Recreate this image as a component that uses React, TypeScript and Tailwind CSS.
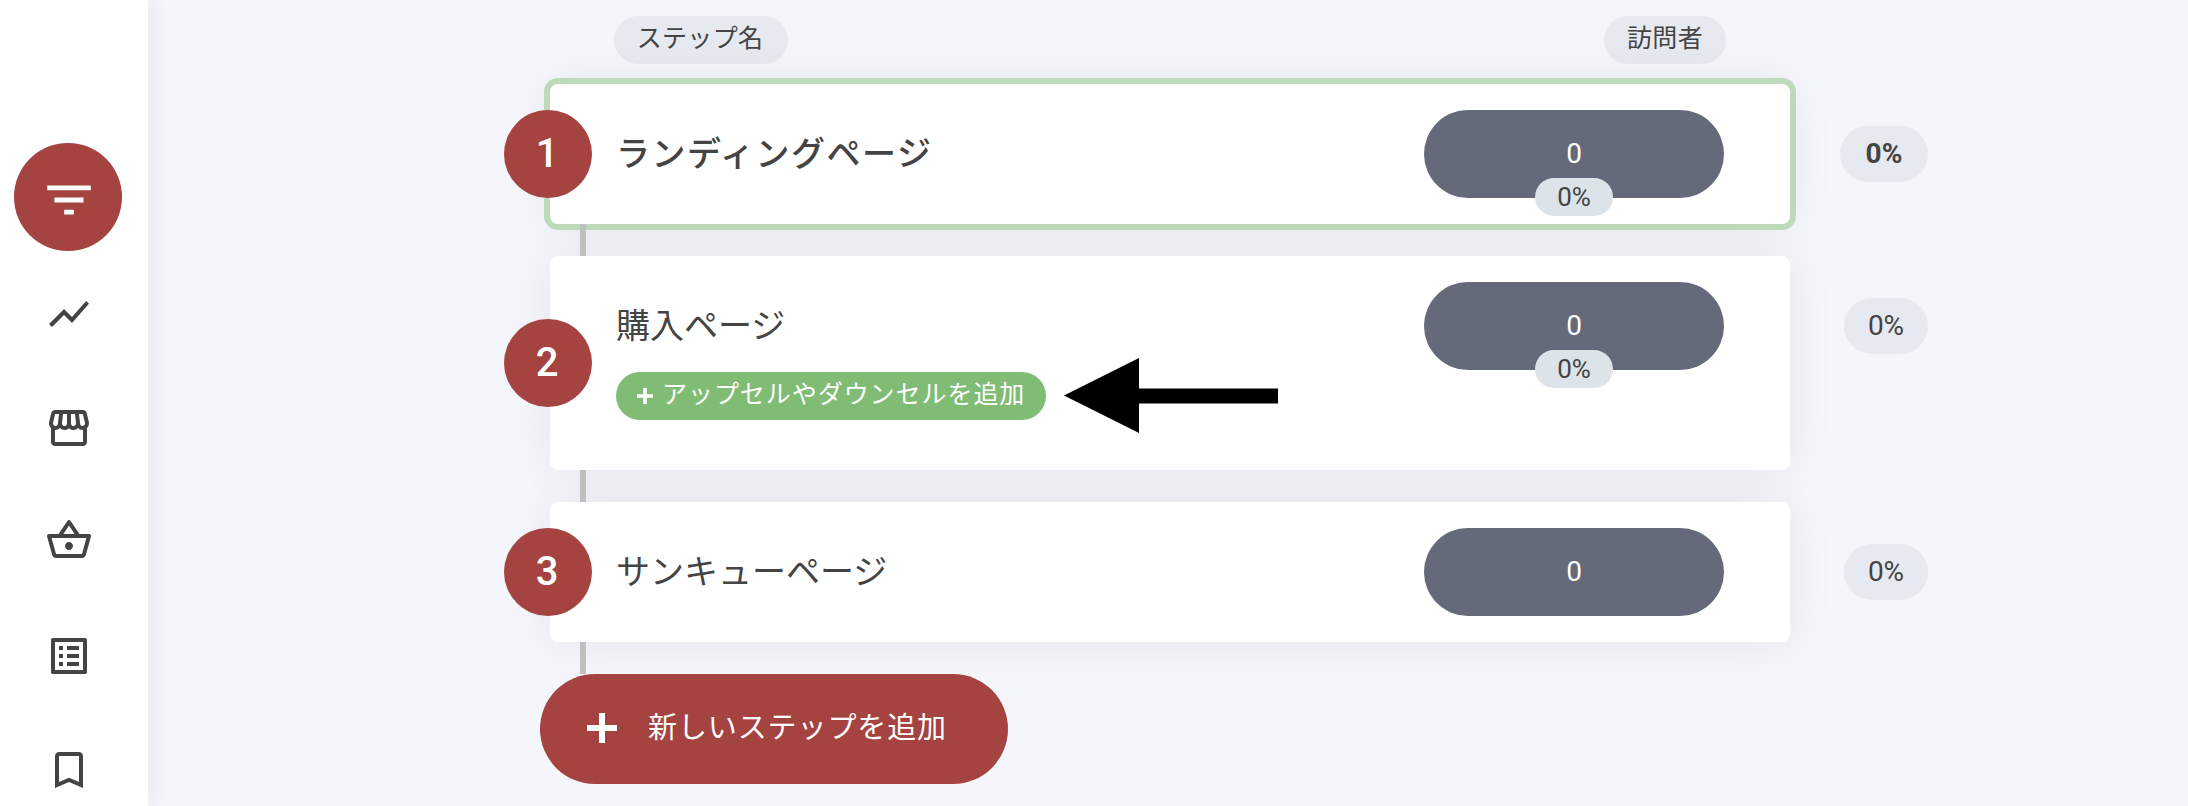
import React from "react";
import {
  MdFilterList,
  MdShowChart,
  MdOutlineStorefront,
  MdOutlineShoppingBasket,
  MdOutlineListAlt,
  MdBookmarkBorder,
} from "react-icons/md";

type Step = {
  title: string;
  visitors: string;
  badge?: string;
  rate: string;
  active?: boolean;
  upsell?: string;
};

const steps: Step[] = [
  { title: "ランディングページ", visitors: "0", badge: "0%", rate: "0%", active: true },
  { title: "購入ページ", visitors: "0", badge: "0%", rate: "0%", upsell: "アップセルやダウンセルを追加" },
  { title: "サンキューページ", visitors: "0", rate: "0%" },
];

function Sidebar() {
  return (
    <nav className="relative flex w-[148px] shrink-0 flex-col items-start bg-white pt-[143px] text-[#444444] shadow-[0_0_32px_rgba(0,0,0,0.08)]">
      <button className="ml-[14px] flex size-[108px] items-center justify-center rounded-full bg-[#a54341] pt-[6px] pl-[2px] text-white">
        <MdFilterList className="size-[58px]" />
      </button>
      <div className="ml-[45px] flex flex-col pt-[39px]">
        <MdShowChart className="size-12" />
        <MdOutlineStorefront className="mt-[66px] size-12" />
        <MdOutlineShoppingBasket className="mt-[64px] size-12" />
        <MdOutlineListAlt className="mt-[68px] size-12" />
        <MdBookmarkBorder className="mt-[66px] size-12" />
      </div>
    </nav>
  );
}

function Arrow() {
  return (
    <svg className="ml-[18px] h-[75px] w-[214px] shrink-0" viewBox="0 0 214 75">
      <path d="M0 37.5 75 0v30.5h139v15H75V75z" fill="#000" />
    </svg>
  );
}

function Connector() {
  return <div className="relative z-10 ml-[30px] h-8 w-[6px] bg-[#bfbfbf]" />;
}

function StepRow({ step, index }: { step: Step; index: number }) {
  return (
    <div className="flex w-[1378px] items-start justify-between">
      <div
        className={
          "relative flex w-[1240px] justify-between rounded-lg bg-white pt-[26px] pr-[66px] pl-[66px] " +
          (step.upsell ? "h-[214px] " : "h-[140px] ") +
          (step.active
            ? "shadow-[0_0_0_6px_#bddabb,0_0_50px_rgba(20,20,40,0.07)]"
            : "shadow-[0_0_50px_rgba(20,20,40,0.07)]")
        }
      >
        <div className="absolute top-1/2 -left-[46px] flex size-[88px] -translate-y-1/2 items-center justify-center rounded-full bg-[#a54341] pr-[2px] text-[40px] leading-none font-medium text-white">
          {index}
        </div>
        <div className="flex flex-col">
          <h2
            className={
              "flex h-[88px] items-center pb-[1px] text-[34px] leading-[44px] whitespace-nowrap " +
              (step.active ? "font-medium tracking-[1.5px]" : "font-normal")
            }
          >
            {step.title}
          </h2>
          {step.upsell && (
            <div className="-mt-[12px] flex h-[75px] items-center">
              <button className="flex h-12 w-[430px] items-center rounded-full bg-[#81bc75] pb-[2px] pl-[20px] text-[25px] leading-8 font-normal tracking-[0.95px] whitespace-nowrap text-white">
                <svg className="mt-[2px] mr-[8px] size-[18px]" viewBox="0 0 18 18">
                  <path d="M9 1v16M1 9h16" stroke="currentColor" strokeWidth="3.6" />
                </svg>
                {step.upsell}
              </button>
              <Arrow />
            </div>
          )}
        </div>
        <div className="relative flex h-[88px] w-[300px] items-center justify-center rounded-full bg-[#646a79] text-[28px] text-white">
          {step.visitors}
          {step.badge && (
            <div className="absolute top-[68px] left-[111px] flex h-[38px] w-[78px] items-center justify-center rounded-full bg-[#dce3e9] text-[26px] leading-none text-[#444444]">
              {step.badge}
            </div>
          )}
        </div>
      </div>
      <div
        className={
          "mt-[42px] flex h-14 items-center justify-center rounded-full bg-[#e7e9f1] text-[28px] leading-none text-[#444444] " +
          (step.active ? "w-[88px] font-bold" : "w-[84px]")
        }
      >
        {step.rate}
      </div>
    </div>
  );
}

export default function App() {
  return (
    <div className="flex h-[806px] w-full overflow-hidden bg-[#f4f6fb] font-['Roboto','Noto_Sans_CJK_JP',sans-serif] text-[#444444]">
      <Sidebar />
      <main className="flex flex-1 flex-col pt-4 pl-[402px]">
        <div className="mb-5 flex w-[1176px] justify-between pl-[64px] text-[25px] leading-8 tracking-[0.3px] whitespace-nowrap">
          <div className="flex h-12 w-[174px] items-center justify-center rounded-full bg-[#e7e9f1] pr-[2px] pb-[2px]">ステップ名</div>
          <div className="flex h-12 w-[122px] items-center justify-center rounded-full bg-[#e7e9f1] pb-[2px]">訪問者</div>
        </div>
        {steps.map((step, i) => (
          <React.Fragment key={step.title}>
            <StepRow step={step} index={i + 1} />
            <Connector />
          </React.Fragment>
        ))}
        <button className="relative z-20 -ml-[10px] flex h-[110px] w-[468px] items-center rounded-full bg-[#a54341] pb-[3px] pl-[46px] text-[29px] leading-9 tracking-[0.9px] whitespace-nowrap text-white">
          <svg className="mr-[30px] size-8" viewBox="0 0 32 32">
            <path d="M16 1v30M1 16h30" stroke="currentColor" strokeWidth="6" />
          </svg>
          新しいステップを追加
        </button>
      </main>
    </div>
  );
}
